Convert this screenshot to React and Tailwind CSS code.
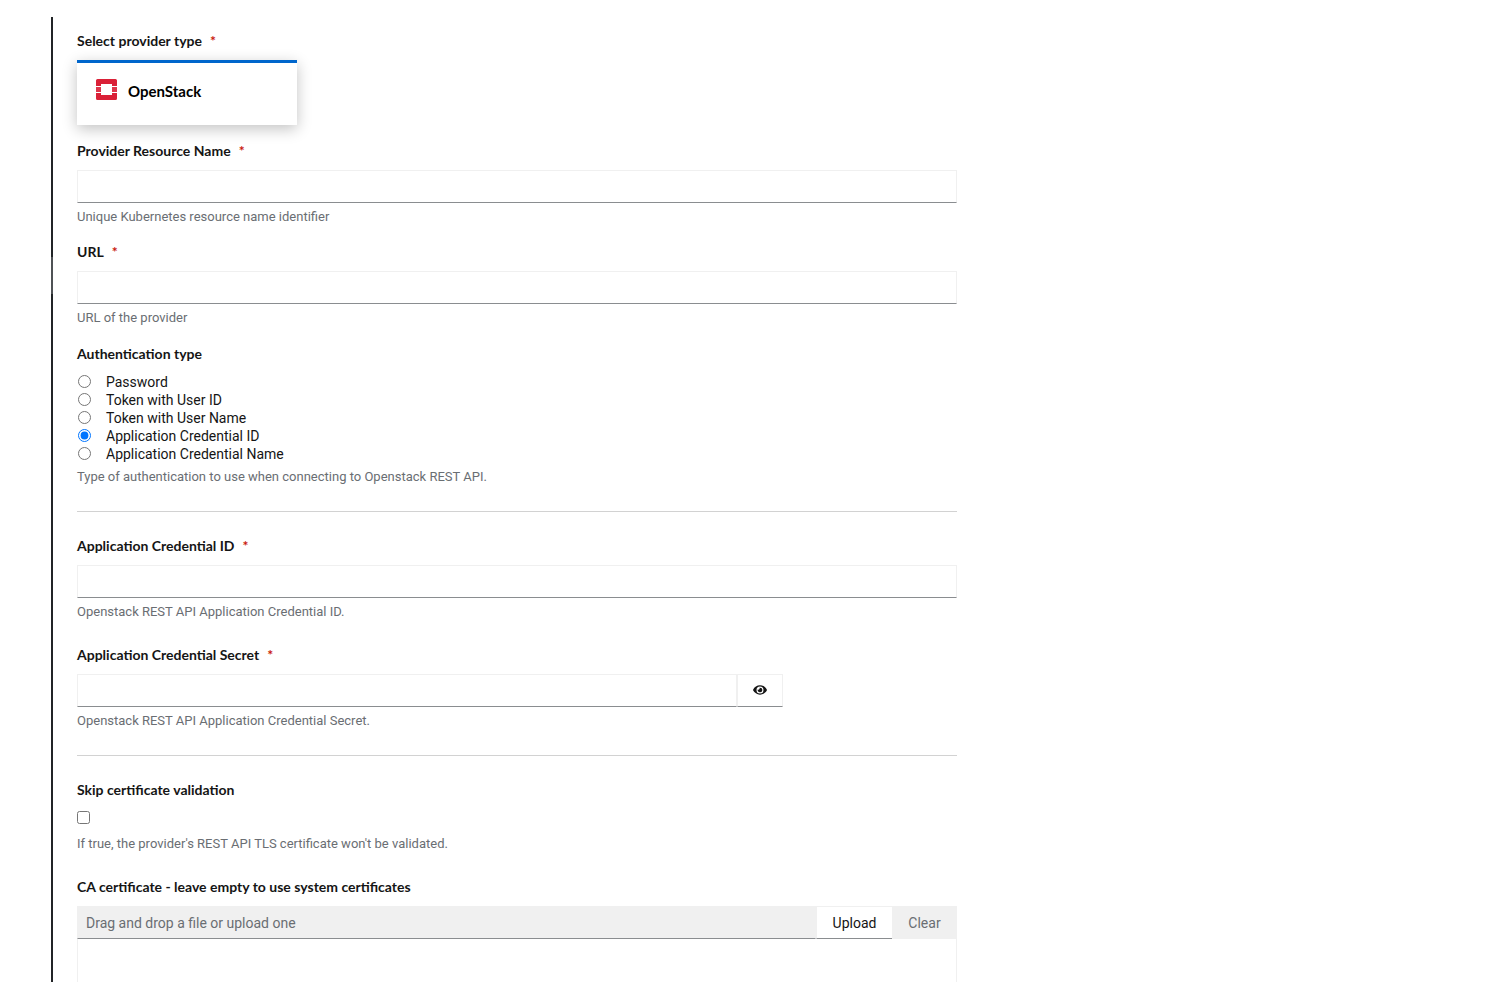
import { useState } from 'react';
import { FaEye } from 'react-icons/fa';

const AUTH_TYPES = [
  { value: 'password', label: 'Password' },
  { value: 'tokenWithUserId', label: 'Token with User ID' },
  { value: 'tokenWithUserName', label: 'Token with User Name' },
  { value: 'applicationCredentialId', label: 'Application Credential ID' },
  { value: 'applicationCredentialName', label: 'Application Credential Name' },
];

const labelClass = "block font-['Lato',sans-serif] text-sm leading-[18px] font-bold text-[#151515]";
const inputClass = 'block h-[33px] min-w-0 border border-[#f0f0f0] border-b-[#8a8d90] bg-white px-2 text-sm text-[#151515] outline-none';

function Required() {
  return <span className="ml-2 text-[#c9190b]" aria-hidden="true">*</span>;
}

function HelperText({ id, children }) {
  return <p id={id} className="text-[13px] leading-5 text-[#6a6e73]">{children}</p>;
}

function OpenStackLogo() {
  return (
    <svg viewBox="0 0 21 21" className="h-[21px] w-[21px]" fill="#da2037" aria-hidden="true">
      <path d="M1.5 0h18A1.5 1.5 0 0 1 21 1.5V7h-5V5H5v2H0V1.5A1.5 1.5 0 0 1 1.5 0z" />
      <path d="M0 8h5v5H0zM16 8h5v5h-5z" opacity="0.9" />
      <path d="M0 14h5v2h11v-2h5v5.5a1.5 1.5 0 0 1-1.5 1.5h-18A1.5 1.5 0 0 1 0 19.5z" />
    </svg>
  );
}

function TextField({ id, label, helper }) {
  return (
    <div>
      <label htmlFor={id} className={labelClass}>{label}<Required /></label>
      <input id={id} type="text" required aria-describedby={`${id}-helper`} className={`${inputClass} mt-2.5 mb-1 w-full`} />
      <HelperText id={`${id}-helper`}>{helper}</HelperText>
    </div>
  );
}

function PasswordField({ id, label, helper }) {
  const [visible, setVisible] = useState(false);

  return (
    <div>
      <label htmlFor={id} className={labelClass}>{label}<Required /></label>
      <div className="mt-2.5 mb-1 flex max-w-[706px]">
        <input id={id} type={visible ? 'text' : 'password'} required aria-describedby={`${id}-helper`} className={`${inputClass} flex-1`} />
        <button
          type="button"
          onClick={() => setVisible(!visible)}
          aria-label="Toggle secret visibility"
          className="flex h-[33px] w-[46px] items-center justify-center border border-[#f0f0f0] border-b-[#8a8d90] pb-px text-[#151515]"
        >
          <FaEye className="h-3.5 w-3.5" />
        </button>
      </div>
      <HelperText id={`${id}-helper`}>{helper}</HelperText>
    </div>
  );
}

export default function App() {
  const [authType, setAuthType] = useState('applicationCredentialId');
  const [skipValidation, setSkipValidation] = useState(false);
  const [certificate, setCertificate] = useState('');

  return (
    <div className="bg-white pt-[17px] pr-6 pb-[18px] pl-[51px] font-['Roboto',sans-serif]">
      <div className="flex">
        {/* Side rail */}
        <div className="flex w-0.5 flex-col bg-[#212427]">
          <div className="h-60" />
          <div className="h-[37px] bg-[#4f5255]" />
        </div>

        <form className="ml-6 max-w-[880px] flex-1 pt-[15px]" onSubmit={(e) => e.preventDefault()}>
          {/* Provider type */}
          <div role="group" aria-labelledby="provider-type">
            <div id="provider-type" className={labelClass}>Select provider type<Required /></div>
            <button
              type="button"
              className="mt-2.5 flex h-[65px] w-[220px] items-start gap-[11px] border-t-[3px] border-[#06c] bg-white pt-4 pl-[19px] shadow-[0_4px_14px_rgba(3,3,3,0.24)]"
            >
              <OpenStackLogo />
              <span className="font-['Lato',sans-serif] text-[15px] leading-6 font-bold text-black">OpenStack</span>
            </button>
          </div>

          <div className="mt-[17px] flex flex-col gap-4">
            <TextField id="name" label="Provider Resource Name" helper="Unique Kubernetes resource name identifier" />
            <TextField id="url" label="URL" helper="URL of the provider" />
          </div>

          {/* Authentication */}
          <fieldset className="mt-[17px]" aria-describedby="auth-helper">
            <legend className={labelClass}>Authentication type</legend>
            <div className="mt-2.5 mb-1">
              {AUTH_TYPES.map(({ value, label }) => (
                <label key={value} className="flex h-[18px] items-start text-sm leading-[18px] text-[#151515]">
                  <input
                    type="radio"
                    name="authType"
                    value={value}
                    checked={authType === value}
                    onChange={() => setAuthType(value)}
                    className="mt-0.5 mr-[15px] ml-px h-[13px] w-[13px]"
                  />
                  {label}
                </label>
              ))}
            </div>
            <HelperText id="auth-helper">Type of authentication to use when connecting to Openstack REST API.</HelperText>
          </fieldset>

          <hr className="mt-6 mb-[25px] border-[#d2d2d2]" />

          <div className="flex flex-col gap-6">
            <TextField id="credential-id" label="Application Credential ID" helper="Openstack REST API Application Credential ID." />
            <PasswordField id="credential-secret" label="Application Credential Secret" helper="Openstack REST API Application Credential Secret." />
          </div>

          <hr className="mt-6 mb-[25px] border-[#d2d2d2]" />

          {/* Certificates */}
          <div>
            <label htmlFor="skip-validation" className={labelClass}>Skip certificate validation</label>
            <input
              id="skip-validation"
              type="checkbox"
              checked={skipValidation}
              onChange={(e) => setSkipValidation(e.target.checked)}
              aria-describedby="skip-validation-helper"
              className="mt-3 mb-2.5 block h-[13px] w-[13px]"
            />
            <HelperText id="skip-validation-helper">If true, the provider's REST API TLS certificate won't be validated.</HelperText>
          </div>

          <div className="mt-6">
            <label htmlFor="ca-cert" className={labelClass}>CA certificate - leave empty to use system certificates</label>
            <div className="mt-2.5 flex h-[33px] text-sm">
              <input
                type="text"
                readOnly
                aria-label="Certificate file"
                placeholder="Drag and drop a file or upload one"
                className="min-w-0 flex-1 border border-[#f0f0f0] border-b-[#8a8d90] bg-[#f0f0f0] px-2 outline-none placeholder:text-[#6a6e73]"
              />
              <button type="button" className="w-[76px] border border-r-0 border-[#f0f0f0] border-b-[#8a8d90] text-[#151515]">Upload</button>
              <button type="button" disabled className="w-[65px] bg-[#f0f0f0] text-[#6a6e73]">Clear</button>
            </div>
            <textarea
              id="ca-cert"
              value={certificate}
              onChange={(e) => setCertificate(e.target.value)}
              className="block h-[43px] w-full resize-none border-x border-[#f0f0f0] px-2 text-sm outline-none"
            />
          </div>
        </form>
      </div>
    </div>
  );
}
